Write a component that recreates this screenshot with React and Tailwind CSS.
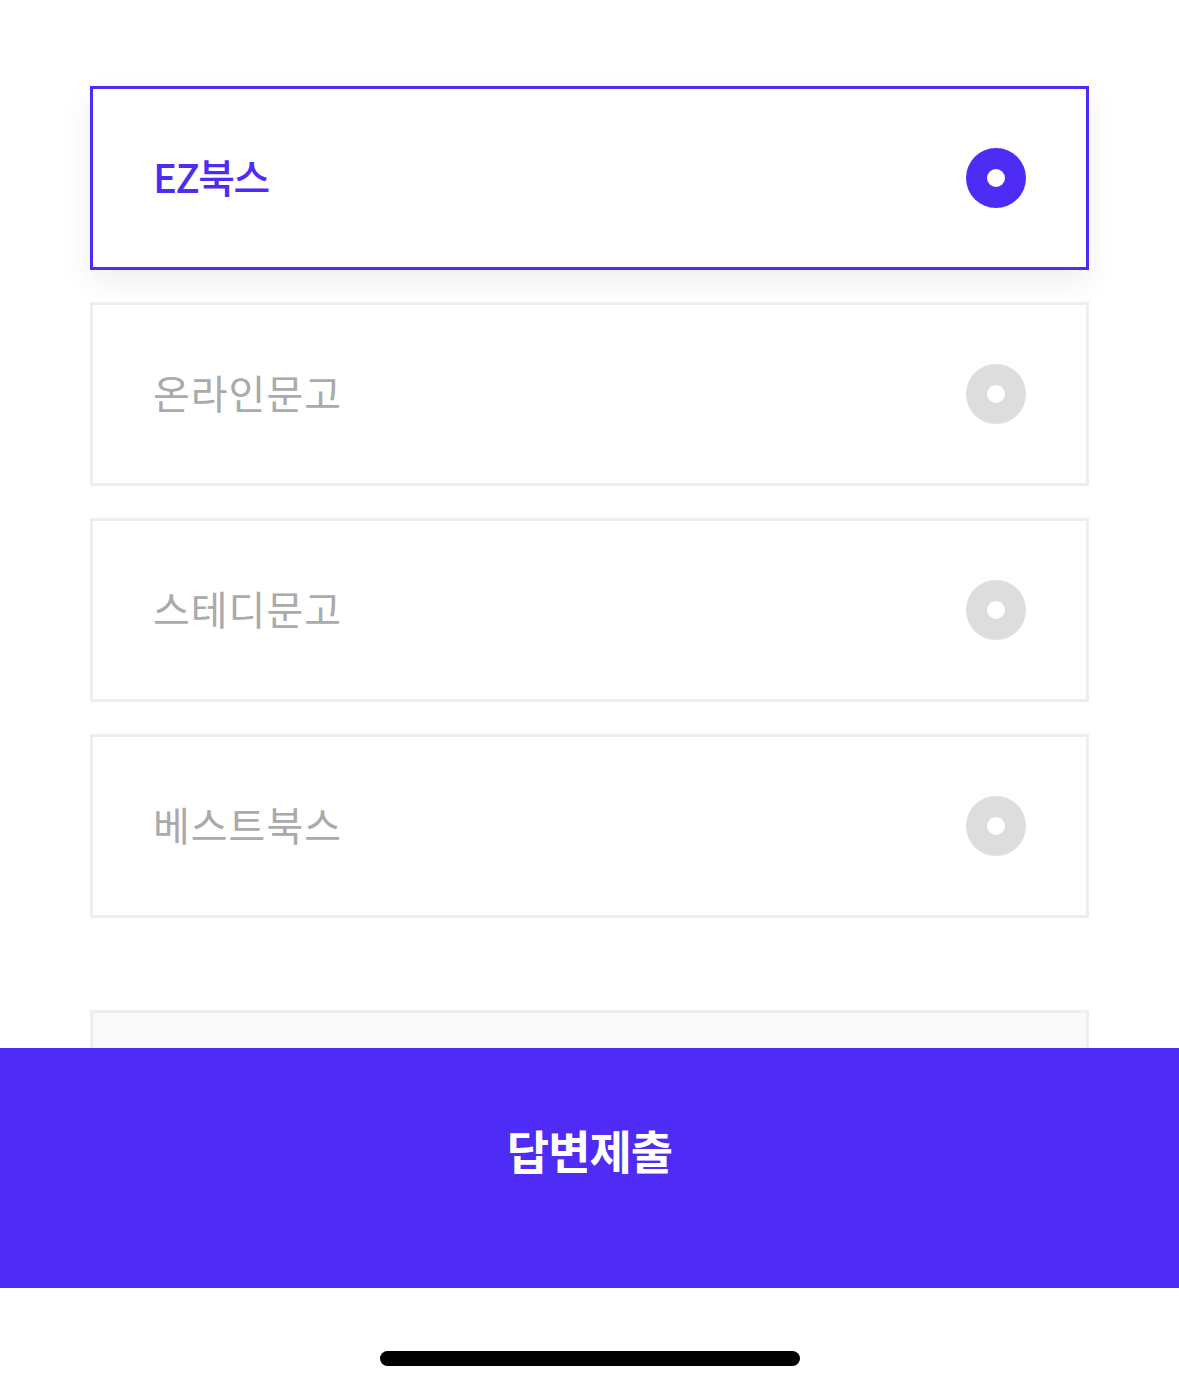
import React, { useState } from 'react';

const options = ['EZ북스', '온라인문고', '스테디문고', '베스트북스'];

function Radio({ on }) {
  return (
    <span
      className={`flex h-[60px] w-[60px] shrink-0 items-center justify-center rounded-full ${on ? 'bg-[#4f2cf5]' : 'bg-[#dddddd]'}`}
    >
      <span className="h-[18px] w-[18px] rounded-full bg-white" />
    </span>
  );
}

export default function App() {
  const [picked, setPicked] = useState(0);

  return (
    <div
      className="flex h-[1390px] w-[1179px] flex-col overflow-hidden bg-white"
      style={{ fontFamily: '"Noto Sans CJK KR", "Noto Sans", sans-serif' }}
    >
      <div className="h-[1048px] shrink-0 overflow-hidden px-[90px] pt-[86px]">
        <div className="flex flex-col gap-[32px]">
          {options.map((label, i) => {
            const on = picked === i;
            return (
              <button
                key={label}
                type="button"
                onClick={() => setPicked(i)}
                className={`flex h-[184px] w-full items-center justify-between border-[3px] bg-white pl-[60px] pr-[60px] text-left ${
                  on ? 'border-[#4f2cf5] shadow-[0_12px_30px_rgba(0,0,0,0.07)]' : 'border-[#eeeeee]'
                }`}
              >
                <span
                  className={`-mt-[4px] text-[40px] leading-none ${
                    on ? 'font-medium tracking-[-1.5px] text-[#4f2cf5]' : 'font-normal tracking-[1px] text-[#aaaaaa]'
                  }`}
                >
                  {label}
                </span>
                <Radio on={on} />
              </button>
            );
          })}
        </div>
        <textarea
          className="mt-[92px] block h-[184px] w-full resize-none border-[3px] border-[#eeeeee] bg-[#f9f9f9] outline-none"
          readOnly
        />
      </div>

      <button
        type="button"
        className="flex h-[240px] w-full shrink-0 items-center justify-center bg-[#4f2cf5] pb-[38px] text-[46px] font-bold tracking-[-1px] text-white"
      >
        답변제출
      </button>

      <div className="flex flex-1 items-start justify-center pt-[63px]">
        <div className="h-[15px] w-[420px] rounded-full bg-black" />
      </div>
    </div>
  );
}
